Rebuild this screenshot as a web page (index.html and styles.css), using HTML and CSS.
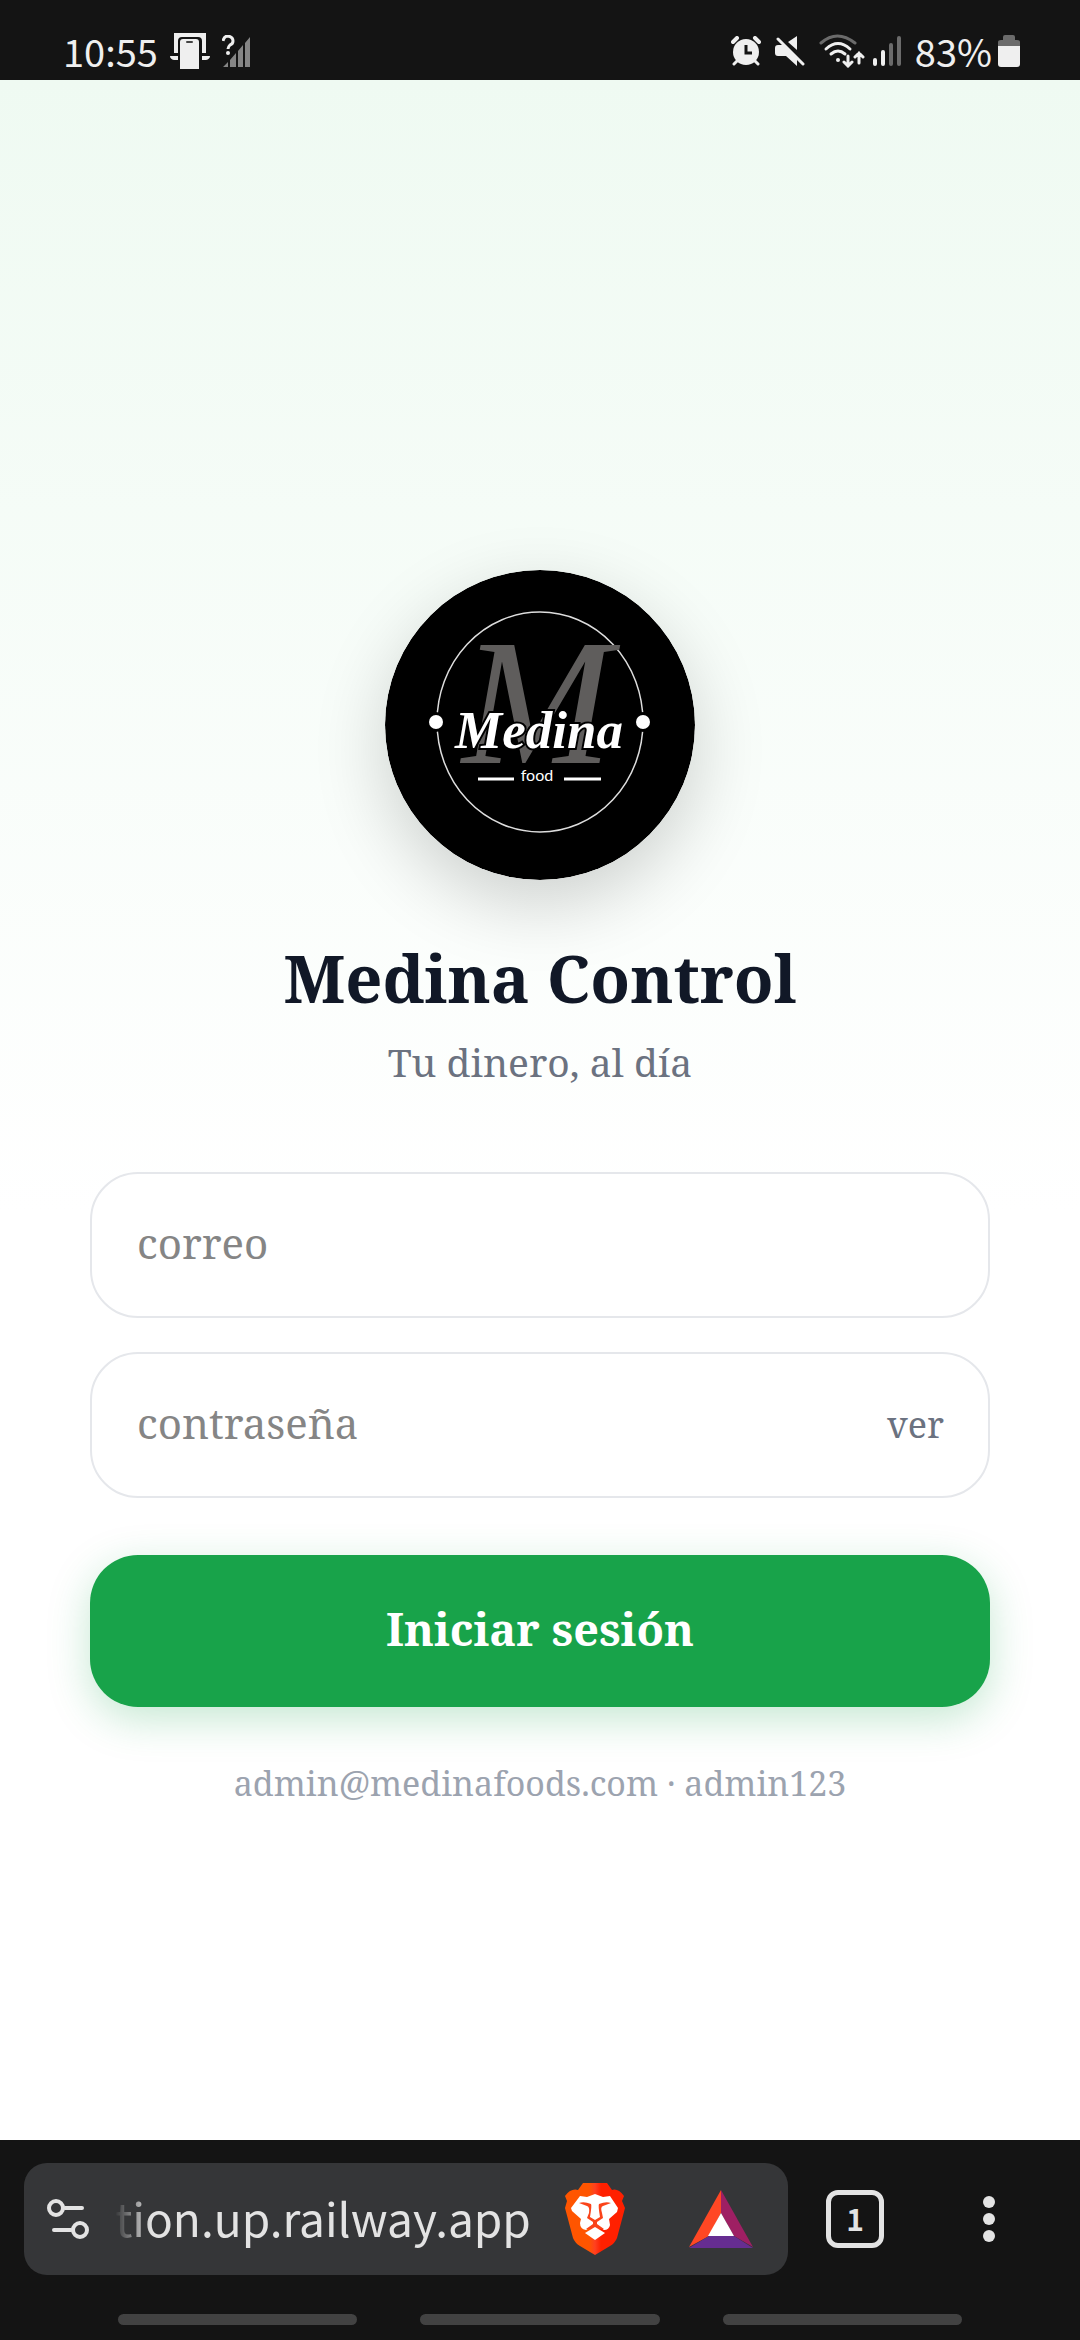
FILE: index.html
```html
<!DOCTYPE html>
<html lang="es">
<head>
  <meta charset="UTF-8" />
  <meta name="viewport" content="width=device-width, initial-scale=1" />
  <title>Medina Control</title>
  <link rel="stylesheet" href="styles.css">
</head>
<body>
  <header class="status">
    <div class="status-left">
      <span>10:55</span>
      <svg width="40" height="36" viewBox="0 0 40 36">
        <path d="M4 0H36V20H32V8Q32 4 28 4H12Q8 4 8 8V20H4Z" fill="#efefef"/>
        <path d="M0 23H8V27H4Q0 26 0 23ZM32 23H40Q40 26 36 27H32Z" fill="#efefef"/>
        <path d="M10 36V9Q10 6 13 6H26Q29 6 29 9V36Z" fill="#efefef"/>
        <rect x="16" y="8" width="7" height="2" rx="1" fill="#444"/>
      </svg>
      <svg width="28" height="32" viewBox="0 0 28 32">
        <path d="M28 2V32H23V8ZM21 10V32H16V16ZM14 18V32H8V25ZM6 27V32H1Z" fill="#858585"/>
        <path d="M1 6Q2 1 6 1Q11 2 11 6Q11 9 8 10Q6 12 6 14" fill="none" stroke="#efefef" stroke-width="3"/>
        <circle cx="6" cy="18" r="2" fill="#efefef"/>
      </svg>
    </div>
    <div class="status-right">
      <svg width="30" height="30" viewBox="0 0 30 30">
        <circle cx="15" cy="16" r="13" fill="#efefef"/>
        <path d="M2 6L6 2M28 6L24 2" stroke="#efefef" stroke-width="4" stroke-linecap="round"/>
        <path d="M6 25L3 28M24 25L27 28" stroke="#efefef" stroke-width="3" stroke-linecap="round"/>
        <path d="M15 9V17H21" fill="none" stroke="#141414" stroke-width="3"/>
      </svg>
      <svg width="30" height="30" viewBox="0 0 30 30">
        <path d="M0 12Q0 9 3 9H8L22 23V30L11 20H3Q0 20 0 17ZM13 6L22 0V14Z" fill="#efefef"/>
        <path d="M3 3L28 28" stroke="#efefef" stroke-width="3" stroke-linecap="round"/>
      </svg>
      <svg width="46" height="34" viewBox="0 0 46 34" fill="none" stroke-width="3" stroke-linecap="round">
        <path d="M2 9Q18 -5 36 9" stroke="#6b6b6b"/>
        <path d="M7 15Q19 4 31 15M12 20Q19 14 26 20" stroke="#efefef"/>
        <circle cx="19" cy="26" r="2" fill="#efefef" stroke="none"/>
        <path d="M29 22V32M25 28L29 32L33 28M40 29V19M36 23L40 19L44 23" stroke="#efefef"/>
      </svg>
      <svg class="bars" width="28" height="32" viewBox="0 0 28 32" stroke-width="4" stroke-linecap="round">
        <path d="M2 25V29M10 17V29" stroke="#efefef"/>
        <path d="M18 10V29M26 3V29" stroke="#6b6b6b"/>
      </svg>
      <span>83%</span>
      <svg class="battery" width="22" height="32" viewBox="0 0 22 32">
        <path d="M0 11V7Q0 5 3 5H5V2Q5 0 7 0H15Q17 0 17 2V5H19Q22 5 22 7V11Z" fill="#6b6b6b"/>
        <path d="M0 11H22V29Q22 32 19 32H3Q0 32 0 29Z" fill="#efefef"/>
      </svg>
    </div>
  </header>

  <main class="login">
    <svg class="logo" viewBox="0 0 310 310" role="img" aria-label="Medina food">
      <circle cx="155" cy="155" r="155" fill="#000"/>
      <ellipse cx="155" cy="152" rx="103" ry="110" fill="none" stroke="#ddd" stroke-width="1.5"/>
      <circle cx="51" cy="152" r="10"/>
      <circle cx="258" cy="152" r="10"/>
      <circle cx="51" cy="152" r="7" fill="#fff"/>
      <circle cx="258" cy="152" r="7" fill="#fff"/>
      <text class="logo-letter" x="152" y="193" text-anchor="middle">M</text>
      <text class="logo-name" x="154" y="178" text-anchor="middle">Medina</text>
      <text class="logo-food" x="152" y="211" text-anchor="middle">food</text>
      <path d="M93 209H129M179 209H216" stroke="#fff" stroke-width="3"/>
    </svg>
    <h1>Medina Control</h1>
    <p class="lema">Tu dinero, al día</p>

    <form class="form">
      <div class="campo">
        <input type="email" placeholder="correo" aria-label="correo">
      </div>
      <div class="campo">
        <input type="password" id="clave" placeholder="contraseña" aria-label="contraseña">
        <button type="button" class="ver" onclick="verClave()">ver</button>
      </div>
      <button type="submit" class="entrar">Iniciar sesión</button>
    </form>
    <p class="demo">admin@medinafoods.com · admin123</p>
  </main>

  <footer class="navegador">
    <div class="toolbar">
      <div class="direccion">
        <button type="button" class="ajustes" aria-label="Información del sitio">
          <svg width="42" height="40" viewBox="0 0 42 40" fill="none" stroke="#e3e3e3" stroke-width="4" stroke-linecap="round">
            <circle cx="9" cy="9" r="7"/>
            <path d="M18 9H35M7 31H24"/>
            <circle cx="33" cy="31" r="7"/>
          </svg>
        </button>
        <input class="url" type="text" value="tion.up.railway.app" aria-label="Dirección" readonly>
        <button type="button" class="accion" aria-label="Brave Shields">
          <svg width="62" height="72" viewBox="0 0 62 72">
            <defs>
              <linearGradient id="leon">
                <stop offset="0.4" stop-color="#ff5500"/>
                <stop offset="0.5" stop-color="#ff4020"/>
                <stop offset="0.6" stop-color="#ff2000"/>
              </linearGradient>
            </defs>
            <path d="M19 0H43L48 7Q54 5 60 13L58 18L61 25L53 55Q51 60 46 63L31 72L16 63Q11 60 9 55L1 25L3 18L1 13Q7 5 14 7Z" fill="url(#leon)"/>
            <path d="M16 13L23 14L31 11L39 14L46 13L54 25L53 29L45 36L46 42Q45 47 40 47L31 41L22 47Q16 46 16 40L17 36L8 28L7 25Z" fill="#fff"/>
            <path d="M15 20Q20 18 27 21Q28 22 26 34L31 37L36 34Q34 22 35 21Q42 18 47 20L39 23Q36 24 38 30L39 35L33 39V41L40 46H22L29 41V39L23 35L25 30Q26 24 23 23Z" fill="#fa4319"/>
            <path d="M31 44L41 50L31 57L21 50Z" fill="#fff"/>
          </svg>
        </button>
        <button type="button" class="accion" aria-label="Brave Rewards">
          <svg width="64" height="58" viewBox="0 0 64 58">
            <path d="M32 0V23L20 46L0 57Z" fill="#ff4724"/>
            <path d="M32 0L64 57L45 46L32 23Z" fill="#9e1f63"/>
            <path d="M0 58L20 46H45L64 58Z" fill="#662d91"/>
            <path d="M32 23L45 46H19Z" fill="#fff"/>
          </svg>
        </button>
      </div>
      <button type="button" class="boton" aria-label="Pestañas"><span class="pestanas">1</span></button>
      <button type="button" class="boton" aria-label="Menú">
        <svg width="12" height="46" viewBox="0 0 12 46" fill="#e3e3e3">
          <circle cx="6" cy="6" r="6"/>
          <circle cx="6" cy="23" r="6"/>
          <circle cx="6" cy="40" r="6"/>
        </svg>
      </button>
    </div>
    <div class="gestos"><span></span><span></span><span></span></div>
  </footer>

  <script>
    function verClave() {
      const clave = document.getElementById("clave");
      clave.type = clave.type === "password" ? "text" : "password";
    }
  </script>
</body>
</html>
```
FILE: styles.css
```css
* { box-sizing: border-box; }
body {
  margin: 0; min-height: 100vh;
  display: flex; flex-direction: column;
  font-family: "Noto Serif", "DejaVu Serif", serif;
  background: white; color: #111827;
}
button, input {
  font: inherit; color: inherit;
  border: none; background: none; padding: 0; outline: none;
}
button { cursor: pointer; }
svg { display: block; flex: none; }

/* Barra de estado */
.status {
  height: 80px; padding: 22px 60px 0 63px;
  display: flex; justify-content: space-between;
  background: #141414; color: #efefef;
  font-family: "Noto Sans CJK SC", sans-serif;
  font-size: 38px; line-height: 58px;
}
.status-left, .status-right { display: flex; align-items: center; }
.status-left { gap: 12px; }
.status-right { gap: 14px; }
.status-right .bars { margin-left: -6px; }
.status-right .battery { margin-left: -8px; }

/* Login */
.login {
  flex: 1; padding: 162px 90px 0;
  display: flex; flex-direction: column;
  align-items: center; justify-content: center;
  background: linear-gradient(#effaf2, #ffffff 55%);
}
.logo {
  width: 310px; height: 310px; border-radius: 50%;
  box-shadow: 0 24px 72px rgba(0, 0, 0, 0.18);
}
.logo-letter {
  font: italic 180px "Liberation Serif", serif; fill: #5f5d5c;
}
.logo-name {
  font: italic bold 53px "Liberation Serif", serif;
  fill: #fff; stroke: #000; stroke-width: 4px; paint-order: stroke;
}
.logo-food { font: 16px Lato, sans-serif; fill: #fff; }
h1 { margin: 54px 0 0; font-size: 65px; line-height: 88px; }
.lema { margin: 12px 0 0; font-size: 39px; line-height: 56px; color: #6b7280; }
.form {
  width: 100%; margin-top: 82px;
  display: flex; flex-direction: column; gap: 34px;
}
.campo {
  height: 146px; padding: 0 44px 0 45px;
  display: flex; align-items: center; gap: 20px;
  background: white; border: 2px solid #e5e7eb; border-radius: 48px;
}
.campo input {
  flex: 1; min-width: 0; height: 100%;
  padding-bottom: 4px; font-size: 42px;
}
.campo input::placeholder { color: #858585; opacity: 1; }
.ver { font-size: 36px; color: #6b7280; }
.entrar {
  height: 152px; margin-top: 23px; padding-bottom: 4px; border-radius: 48px;
  background: #18a34a; color: white;
  font-size: 45px; font-weight: bold;
  box-shadow: 0 12px 42px rgba(22, 163, 74, 0.25);
}
.demo { margin: 52px 0 6px; font-size: 34px; line-height: 48px; color: #9ca3af; }

/* Barra del navegador */
.navegador {
  background: #141414; color: #e3e3e3;
  font-family: "Noto Sans CJK SC", sans-serif;
}
.toolbar { display: flex; align-items: center; padding: 23px 24px 0; }
.direccion {
  flex: 1; min-width: 0; height: 112px; padding: 0 4px 0 23px;
  display: flex; align-items: center;
  background: #353638; border-radius: 23px;
}
.ajustes { margin-right: 26px; }
.url {
  flex: 1; min-width: 0; height: 100%;
  padding-bottom: 4px; font-size: 46px;
  -webkit-mask-image: linear-gradient(90deg, transparent, black 36px);
  mask-image: linear-gradient(90deg, transparent, black 36px);
}
.accion { width: 126px; display: flex; justify-content: center; }
.boton { width: 134px; display: flex; justify-content: center; }
.pestanas {
  width: 58px; height: 58px; border: 5px solid #e3e3e3; border-radius: 12px;
  font-size: 30px; font-weight: bold; line-height: 46px;
}
.gestos { display: flex; gap: 63px; padding: 39px 118px 15px; }
.gestos span { flex: 1; height: 11px; border-radius: 6px; background: #424242; }
```
